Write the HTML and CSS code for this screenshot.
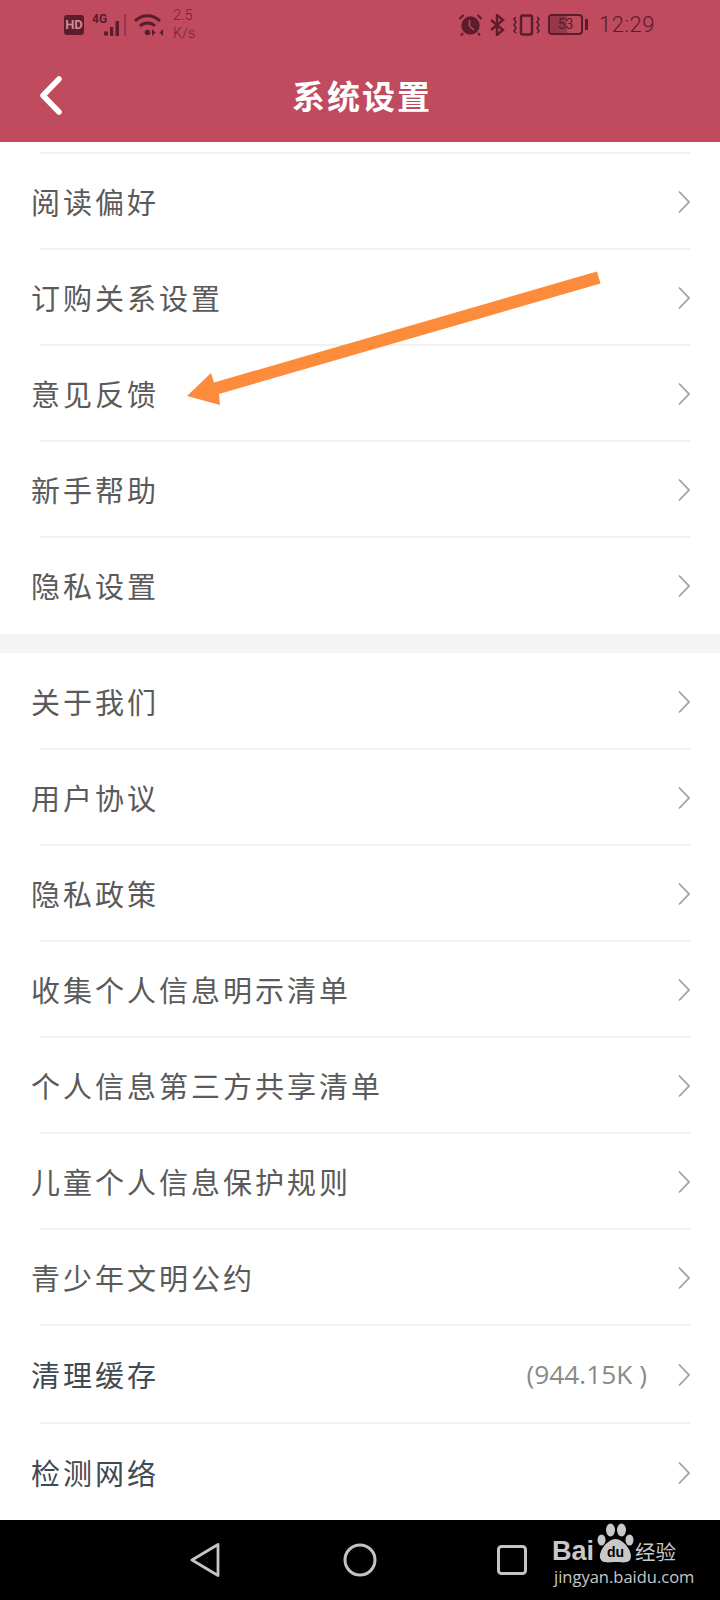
FILE: index.html
```html
<!DOCTYPE html>
<html lang="zh-CN">
<head>
    <meta charset="UTF-8">
    <meta name="viewport" content="width=device-width, initial-scale=1.0">
    <title>系统设置</title>
    <link rel="stylesheet" href="styles.css">
</head>
<body>
    <div class="page">
        <header class="top-bar">
            <div class="status-bar">
                <div class="status-left">
                    <span class="hd-badge">HD</span>
                    <div class="signal">
                        <span class="signal-type">4G</span>
                        <svg class="signal-bars" width="23" height="22" viewBox="0 0 23 22">
                            <circle cx="2" cy="19.5" r="2.2" fill="#5c1c2c"/>
                            <rect x="6" y="13" width="3.2" height="9" fill="#5c1c2c"/>
                            <rect x="11.5" y="7" width="3.5" height="15" fill="#5c1c2c"/>
                            <rect x="20" y="0" width="2.2" height="22" fill="#96384a"/>
                        </svg>
                    </div>
                    <svg class="wifi" width="29" height="22" viewBox="0 0 29 22" fill="none" stroke="#5c1c2c" stroke-width="2.8">
                        <path d="M1 7C8 0 19 0 26 7"/>
                        <path d="M6 12C10 8 17 8 21 12"/>
                        <circle cx="13.5" cy="18.5" r="2.8" fill="#5c1c2c" stroke="none"/>
                        <path d="M18 15l3.5 3.5l-3.5 3.5z M29 15l-3.5 3.5l3.5 3.5z" fill="#5c1c2c" stroke="none"/>
                    </svg>
                    <div class="net-speed">
                        <span>2.5</span>
                        <span>K/s</span>
                    </div>
                </div>
                <div class="status-right">
                    <svg class="alarm" width="23" height="22" viewBox="0 0 23 22">
                        <circle cx="11.5" cy="11.5" r="9.2" fill="#5c1c2c"/>
                        <path d="M10.5 6v6l4.5 4" fill="none" stroke="#c04a5e" stroke-width="1.5"/>
                        <path d="M0.5 5l4-4M22.5 5l-4-4M4 19l-2 2.5M19 19l2 2.5" stroke="#5c1c2c" stroke-width="2" fill="none"/>
                    </svg>
                    <svg class="bluetooth" width="15" height="22" viewBox="0 0 15 22" fill="none" stroke="#5c1c2c" stroke-width="2.4">
                        <path d="M1 6l12 10l-6 5V1l6 5L1 16"/>
                    </svg>
                    <svg class="vibrate" width="27" height="22" viewBox="0 0 27 22" fill="none" stroke="#5c1c2c" stroke-width="2.5">
                        <rect x="8" y="1.5" width="11" height="19" rx="2"/>
                        <path d="M3 3l-2 2l2 3l-2 3l2 3l-2 3l2 2M24 3l2 2l-2 3l2 3l-2 3l2 3l-2 2" stroke-width="1.6"/>
                    </svg>
                    <div class="battery">
                        <div class="battery-body">
                            <div class="battery-level"></div>
                            <span class="battery-text">53</span>
                        </div>
                        <div class="battery-tip"></div>
                    </div>
                    <span class="clock">12:29</span>
                </div>
            </div>
            <div class="title-bar">
                <svg class="back-icon" width="24" height="40" viewBox="0 0 24 40" fill="none" stroke="#fff" stroke-width="5.5" stroke-linecap="round" stroke-linejoin="round">
                    <path d="M20 3L4 19.5L20 36"/>
                </svg>
                <h1 class="title">系统设置</h1>
            </div>
        </header>

        <main class="content">
            <ul class="menu menu-first">
                <li class="row"><span class="label">阅读偏好</span><svg class="chevron" width="12" height="24" viewBox="0 0 12 24"><path d="M1 1.5L11 12L1 22.5"/></svg></li>
                <li class="row"><span class="label">订购关系设置</span><svg class="chevron" width="12" height="24" viewBox="0 0 12 24"><path d="M1 1.5L11 12L1 22.5"/></svg></li>
                <li class="row"><span class="label">意见反馈</span><svg class="chevron" width="12" height="24" viewBox="0 0 12 24"><path d="M1 1.5L11 12L1 22.5"/></svg></li>
                <li class="row"><span class="label">新手帮助</span><svg class="chevron" width="12" height="24" viewBox="0 0 12 24"><path d="M1 1.5L11 12L1 22.5"/></svg></li>
                <li class="row"><span class="label">隐私设置</span><svg class="chevron" width="12" height="24" viewBox="0 0 12 24"><path d="M1 1.5L11 12L1 22.5"/></svg></li>
            </ul>
            <div class="band"></div>
            <ul class="menu">
                <li class="row row-plain"><span class="label">关于我们</span><svg class="chevron" width="12" height="24" viewBox="0 0 12 24"><path d="M1 1.5L11 12L1 22.5"/></svg></li>
                <li class="row"><span class="label">用户协议</span><svg class="chevron" width="12" height="24" viewBox="0 0 12 24"><path d="M1 1.5L11 12L1 22.5"/></svg></li>
                <li class="row"><span class="label">隐私政策</span><svg class="chevron" width="12" height="24" viewBox="0 0 12 24"><path d="M1 1.5L11 12L1 22.5"/></svg></li>
                <li class="row"><span class="label">收集个人信息明示清单</span><svg class="chevron" width="12" height="24" viewBox="0 0 12 24"><path d="M1 1.5L11 12L1 22.5"/></svg></li>
                <li class="row"><span class="label">个人信息第三方共享清单</span><svg class="chevron" width="12" height="24" viewBox="0 0 12 24"><path d="M1 1.5L11 12L1 22.5"/></svg></li>
                <li class="row"><span class="label">儿童个人信息保护规则</span><svg class="chevron" width="12" height="24" viewBox="0 0 12 24"><path d="M1 1.5L11 12L1 22.5"/></svg></li>
                <li class="row"><span class="label">青少年文明公约</span><svg class="chevron" width="12" height="24" viewBox="0 0 12 24"><path d="M1 1.5L11 12L1 22.5"/></svg></li>
                <li class="row row-tall"><span class="label label-dark">清理缓存</span><span class="value">(944.15K )</span><svg class="chevron" width="12" height="24" viewBox="0 0 12 24"><path d="M1 1.5L11 12L1 22.5"/></svg></li>
                <li class="row row-tall"><span class="label label-dark">检测网络</span><svg class="chevron" width="12" height="24" viewBox="0 0 12 24"><path d="M1 1.5L11 12L1 22.5"/></svg></li>
            </ul>
        </main>

        <footer class="nav-bar">
            <svg class="nav-back" width="30" height="34" viewBox="0 0 30 34" fill="none" stroke="#c4c4c4" stroke-width="2.8" stroke-linejoin="round">
                <path d="M28 1.5L2 17L28 32.5Z"/>
            </svg>
            <svg class="nav-home" width="34" height="34" viewBox="0 0 34 34" fill="none" stroke="#c4c4c4" stroke-width="3">
                <circle cx="17" cy="17" r="15"/>
            </svg>
            <svg class="nav-recent" width="30" height="30" viewBox="0 0 30 30" fill="none" stroke="#c4c4c4" stroke-width="3">
                <rect x="1.5" y="1.5" width="27" height="27" rx="3"/>
            </svg>
        </footer>

        <!-- annotation and watermark sit on top of the screenshot -->
        <svg class="arrow" width="430" height="150" viewBox="0 0 430 150">
            <path d="M411 1.500L414.500 13.500L33 124L34 135L1 126L25 103L28 112.500Z" fill="#fd8b3c"/>
        </svg>
        <div class="watermark">
            <div class="wm-top">
                <span class="wm-bai">Bai</span>
                <svg class="wm-paw" width="39" height="42" viewBox="0 0 38 42">
                    <ellipse cx="5" cy="18" rx="4" ry="5.5" fill="#c8c8c8"/>
                    <ellipse cx="14" cy="8" rx="4.5" ry="6.5" fill="#c8c8c8"/>
                    <ellipse cx="25" cy="8" rx="4.5" ry="6.5" fill="#c8c8c8"/>
                    <ellipse cx="33" cy="18" rx="4" ry="5.5" fill="#c8c8c8"/>
                    <path d="M19 17C27 17 37 30 34 37C32 42 24 40 19 40C14 40 6 42 4 37C1 30 11 17 19 17Z" fill="#c8c8c8"/>
                    <text x="19" y="35" text-anchor="middle" class="wm-du">du</text>
                </svg>
                <span class="wm-cn">经验</span>
            </div>
            <div class="wm-url">jingyan.baidu.com</div>
        </div>
    </div>
</body>
</html>
```

FILE: styles.css
```css
* {
    box-sizing: border-box;
}

body {
    margin: 0;
    padding: 0;
    font-family: "Noto Sans CJK SC", "Noto Sans", sans-serif;
    background-color: #fff;
}

.page {
    position: relative;
    width: 720px;
    height: 1600px;
    display: flex;
    flex-direction: column;
    overflow: hidden;
}

/* top bar */
.top-bar {
    height: 142px;
    background-color: #c04a5e;
}

.status-bar {
    height: 48px;
    padding: 1px 65px 0 64px;
    display: flex;
    justify-content: space-between;
    align-items: center;
    color: #5c1c2c;
}

.status-left,
.status-right {
    display: flex;
    align-items: center;
}

.hd-badge {
    width: 20px;
    height: 20px;
    border-radius: 3px;
    background-color: #5c1c2c;
    color: #d08c99;
    font: bold 13px/20px "Roboto", sans-serif;
    text-align: center;
}

.signal {
    position: relative;
    width: 35px;
    height: 22px;
    margin-left: 8px;
    display: flex;
    justify-content: flex-end;
}

.signal-type {
    position: absolute;
    left: 0;
    top: -1px;
    font: bold 12px/12px "Roboto", sans-serif;
}

.wifi {
    margin-left: 7px;
}

.net-speed {
    margin-left: 10px;
    display: flex;
    flex-direction: column;
    font: 300 14.5px/18px "Roboto", sans-serif;
    color: #6e2536;
}

.bluetooth {
    margin-left: 8px;
}

.vibrate {
    margin-left: 8px;
}

.battery {
    margin-left: 8px;
    display: flex;
    align-items: center;
    gap: 2px;
}

.battery-body {
    position: relative;
    width: 35px;
    height: 21px;
    border: 2px solid #5c1c2c;
    border-radius: 4px;
    overflow: hidden;
}

.battery-level {
    width: 55%;
    height: 100%;
    background-color: #96384a;
}

.battery-text {
    position: absolute;
    left: 0;
    right: 0;
    top: 0;
    text-align: center;
    font: 14px/17px "Roboto", sans-serif;
    color: #5c1c2c;
}

.battery-tip {
    width: 3px;
    height: 11px;
    background-color: #5c1c2c;
}

.clock {
    margin-left: 11px;
    font: 300 22px/24px "Roboto", sans-serif;
    letter-spacing: 0.5px;
}

.title-bar {
    position: relative;
    height: 94px;
    display: flex;
    align-items: center;
    justify-content: center;
}

.back-icon {
    position: absolute;
    left: 39px;
    top: 28px;
}

.title {
    margin: 0 0 0 4px;
    color: #fff;
    font-size: 33px;
    font-weight: 700;
    letter-spacing: 2px;
}

/* settings list */
.content {
    flex: 1;
    background-color: #fff;
}

.menu {
    list-style: none;
    margin: 0;
    padding: 0;
}

.menu-first {
    padding-top: 10px;
}

.row {
    height: 96px;
    margin: 0 30px 0 40px;
    display: flex;
    align-items: center;
    border-top: 2px solid #f1f1f1;
}

.row-plain {
    height: 95px;
    border-top: none;
}

.row-tall {
    height: 98px;
}

.label {
    flex: 1;
    margin-left: -9px;
    font-size: 29px;
    letter-spacing: 3px;
    color: #5a5a5a;
}

.label-dark {
    color: #3f4a52;
}

.value {
    margin-right: 31px;
    font: 26.3px "Open Sans", sans-serif;
    color: #8a8a8a;
}

.chevron {
    margin-top: 2px;
    fill: none;
    stroke: #9ba0a5;
    stroke-width: 1.8;
}

.band {
    height: 19px;
    margin-top: 2px;
    background-color: #f4f4f4;
}

/* system nav */
.nav-bar {
    height: 80px;
    background-color: #000;
    display: flex;
    align-items: center;
    padding-left: 190px;
}

.nav-home {
    margin-left: 123px;
}

.nav-recent {
    margin-left: 120px;
}

/* overlays */
.arrow {
    position: absolute;
    left: 186px;
    top: 270px;
}

.watermark {
    position: absolute;
    left: 552px;
    top: 1522px;
    width: 130px;
    color: #c8c8c8;
}

.wm-top {
    display: flex;
    align-items: flex-end;
    height: 42px;
}

.wm-bai {
    font: bold 27px/26px "Liberation Sans", sans-serif;
}

.wm-paw {
    margin-left: 2px;
}

.wm-du {
    font: bold 14px "Liberation Sans", sans-serif;
    fill: #000;
}

.wm-cn {
    font-size: 20.5px;
    line-height: 26px;
    white-space: nowrap;
}

.wm-url {
    margin: 4px 0 0 2px;
    font: 16.5px/18px "Open Sans", sans-serif;
    white-space: nowrap;
}
```
